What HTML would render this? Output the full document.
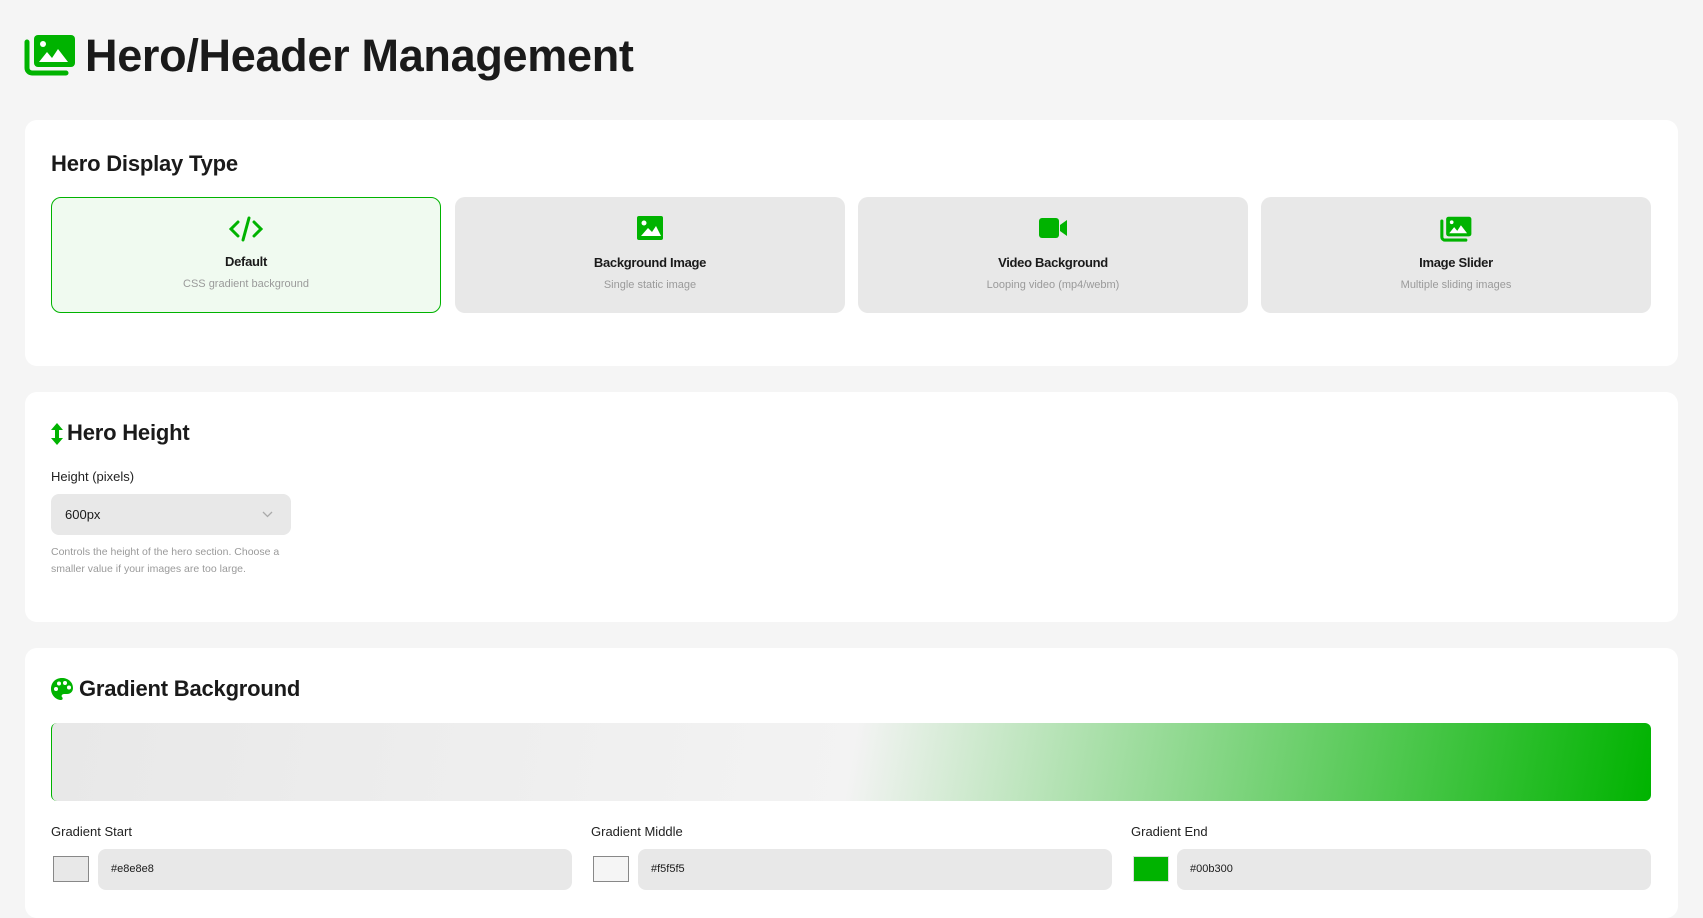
<!DOCTYPE html>
<html><head><meta charset="utf-8"><style>
*{box-sizing:border-box;margin:0;padding:0}
body{width:1703px;height:906px;overflow:hidden;background:#f5f5f5;font-family:"Liberation Sans",sans-serif;color:#1a1a1a;position:relative}
.h{font-family:"Liberation Sans",sans-serif;font-weight:700;letter-spacing:-0.2px}
.abs{position:absolute}
.card{position:absolute;left:25px;width:1653px;background:#fff;border-radius:12px}
.opt{position:absolute;top:197px;width:390px;height:116px;background:#e8e8e8;border-radius:10px;text-align:center}
.opt.sel{background:#f0faf0;border:1.5px solid #00b300}
.opt svg{position:absolute;left:50%;top:18px;transform:translateX(-50%)}
.opt .t{position:absolute;left:0;right:0;top:58px;font-size:13px;font-weight:700;letter-spacing:-0.3px}
.opt .s{position:absolute;left:0;right:0;top:82px;font-size:11px;color:#9a9a9a}
.sel .t{top:56px}.sel .s{top:80px}
.lbl{position:absolute;font-size:13px;color:#222}
.inp{position:absolute;height:41px;background:#e8e8e8;border-radius:8px;font-size:11px;padding:14px 13px}
.sw{position:absolute;width:36px;height:26px;border:1px solid #888}
</style></head><body>
<svg class="abs" style="left:24px;top:34px" width="52" height="42" viewBox="0 0 52 42"><path d="M3 8v26a5 5 0 0 0 5 5h34" stroke="#00b300" stroke-width="5" fill="none" stroke-linecap="round"/><rect x="10" y="1" width="41" height="32" rx="4" fill="#00b300"/><circle cx="19" cy="10" r="3" fill="#fff"/><path d="M15 28l8-10 5 6 6-9 10 13z" fill="#fff"/></svg>
<div class="abs h" style="left:85px;top:30px;font-size:45px;letter-spacing:-0.3px">Hero/Header Management</div>

<div class="card" style="top:120px;height:246px"></div>
<div class="abs h" style="left:51px;top:151px;font-size:22px">Hero Display Type</div>
<div class="opt sel" style="left:51px"><svg width="36" height="26" viewBox="0 0 36 26"><path d="M10 6l-7 7 7 7M26 6l7 7-7 7M21 2l-6 22" stroke="#00b300" stroke-width="3" fill="none" stroke-linecap="round"/></svg><div class="t">Default</div><div class="s">CSS gradient background</div></div>
<div class="opt" style="left:455px"><svg width="28" height="26" viewBox="0 0 28 26"><rect x="1" y="1" width="26" height="24" rx="2" fill="#00b300"/><circle cx="8" cy="8" r="2.5" fill="#fff"/><path d="M5 21l7-8 4 4 4-6 5 10z" fill="#fff"/></svg><div class="t">Background Image</div><div class="s">Single static image</div></div>
<div class="opt" style="left:858px"><svg width="32" height="26" viewBox="0 0 32 26"><rect x="2" y="3" width="20" height="20" rx="3" fill="#00b300"/><path d="M23 10l7-5v16l-7-5z" fill="#00b300"/></svg><div class="t">Video Background</div><div class="s">Looping video (mp4/webm)</div></div>
<div class="opt" style="left:1261px"><svg width="32" height="28" viewBox="0 0 52 42"><path d="M3 8v26a5 5 0 0 0 5 5h34" stroke="#00b300" stroke-width="5" fill="none" stroke-linecap="round"/><rect x="10" y="1" width="41" height="32" rx="4" fill="#00b300"/><circle cx="19" cy="10" r="3" fill="#fff"/><path d="M15 28l8-10 5 6 6-9 10 13z" fill="#fff"/></svg><div class="t">Image Slider</div><div class="s">Multiple sliding images</div></div>

<div class="card" style="top:392px;height:230px"></div>
<svg class="abs" style="left:50px;top:422px" width="14" height="24" viewBox="0 0 14 24"><path d="M7 1l6 7H9v8h4l-6 7-6-7h4V8H1z" fill="#00b300"/></svg>
<div class="abs h" style="left:67px;top:420px;font-size:22px">Hero Height</div>
<div class="lbl" style="left:51px;top:469px">Height (pixels)</div>
<div class="inp" style="left:51px;top:494px;width:240px;font-size:13px;padding:13px 14px">600px<svg style="position:absolute;right:18px;top:17px" width="11" height="7" viewBox="0 0 11 7"><path d="M1 1l4.5 4.5L10 1" stroke="#aaa" stroke-width="1.3" fill="none"/></svg></div>
<div class="abs" style="left:51px;top:544px;font-size:10.5px;color:#9a9a9a;line-height:17px;width:245px">Controls the height of the hero section. Choose a smaller value if your images are too large.</div>

<div class="card" style="top:648px;height:270px"></div>
<svg class="abs" style="left:50px;top:677px" width="24" height="24" viewBox="0 0 24 24"><path d="M12 1C5 1 1 6 1 12c0 6 5 11 10 11 2 0 2-2 1-3-1-1 0-3 2-3h3c4 0 6-3 6-6C23 5 18 1 12 1z" fill="#00b300"/><circle cx="6" cy="12" r="2" fill="#fff"/><circle cx="9" cy="6.5" r="2" fill="#fff"/><circle cx="15" cy="6" r="2" fill="#fff"/><circle cx="19" cy="10.5" r="2" fill="#fff"/></svg>
<div class="abs h" style="left:79px;top:676px;font-size:22px">Gradient Background</div>
<div class="abs" style="left:51px;top:723px;width:1600px;height:78px;border-radius:6px;border-left:1.5px solid #00b300;background:linear-gradient(100deg,#e8e8e8 0%,#f3f3f3 50%,#00b300 100%)"></div>
<div class="lbl" style="left:51px;top:824px">Gradient Start</div>
<div class="lbl" style="left:591px;top:824px">Gradient Middle</div>
<div class="lbl" style="left:1131px;top:824px">Gradient End</div>
<div class="sw" style="left:53px;top:856px;background:#e8e8e8"></div>
<div class="inp" style="left:98px;top:849px;width:474px">#e8e8e8</div>
<div class="sw" style="left:593px;top:856px;background:#f5f5f5"></div>
<div class="inp" style="left:638px;top:849px;width:474px">#f5f5f5</div>
<div class="sw" style="left:1133px;top:856px;background:#00b300;border-color:#ddd"></div>
<div class="inp" style="left:1177px;top:849px;width:474px">#00b300</div>
</body></html>
